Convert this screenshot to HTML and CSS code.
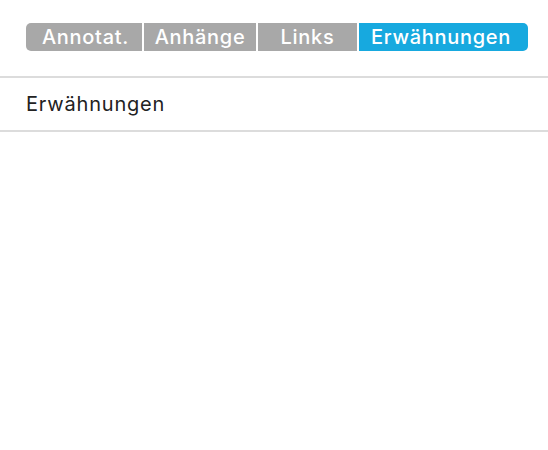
FILE: index.html
```html
<!DOCTYPE html>
<html lang="de">
<head>
    <meta charset="UTF-8">
    <meta name="viewport" content="width=device-width, initial-scale=1.0">
    <title>Erwähnungen</title>
    <link rel="stylesheet" href="styles.css">
</head>
<body>
    <div class="toolbar">
        <div class="tabs">
            <button class="tab tab-annot">Annotat.</button>
            <button class="tab tab-attach">Anhänge</button>
            <button class="tab tab-links">Links</button>
            <button class="tab tab-mentions active">Erwähnungen</button>
        </div>
    </div>

    <div class="list">
        <div class="list-row">Erwähnungen</div>
    </div>
</body>
</html>
```

FILE: styles.css
```css
body {
    margin: 0;
    font-family: Inter, "Noto Sans", sans-serif;
    background: #fff;
    width: 548px;
    height: 450px;
}
.toolbar {
    padding: 23px 20px 25px 26px;
    border-bottom: 2px solid #dcdcdc;
}
.tabs {
    display: flex;
    gap: 2px;
}
.tab {
    height: 28px;
    border: none;
    padding: 0;
    margin: 0;
    background: #a8a8a8;
    color: #fff;
    font-family: Inter, "Noto Sans", sans-serif;
    font-size: 20px;
    font-weight: 500;
    letter-spacing: 0.7px;
    line-height: 28px;
    text-align: center;
}
.tab-annot {
    width: 116px;
    padding-left: 3px;
    border-radius: 5px 0 0 5px;
}
.tab-attach {
    width: 112px;
}
.tab-links {
    width: 99px;
}
.tab-mentions {
    width: 169px;
    padding-right: 5px;
    border-radius: 0 5px 5px 0;
}
.tab.active {
    background: #17a9df;
}
.list-row {
    padding: 15px 26px 15px;
    font-size: 20px;
    letter-spacing: 0.8px;
    line-height: 22px;
    color: #222;
    border-bottom: 2px solid #dcdcdc;
}
```
